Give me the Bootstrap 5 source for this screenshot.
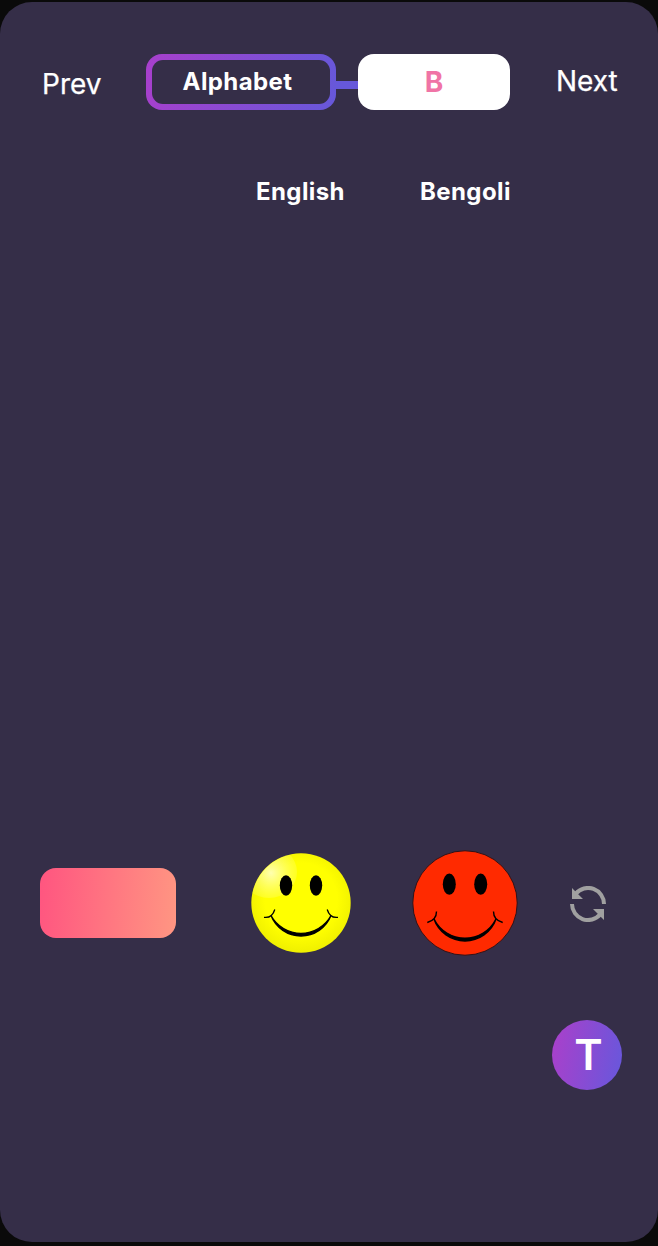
<!DOCTYPE html>
<html lang="en">
<head>
<meta charset="utf-8">
<meta name="viewport" content="width=device-width, initial-scale=1">
<title>Alphabet</title>
<link href="https://cdn.jsdelivr.net/npm/bootstrap@5.3.0/dist/css/bootstrap.min.css" rel="stylesheet">
<style>
body { background: #0a0a0a; font-family: Inter, sans-serif; color: #fff; }
.screen { height: 1240px; margin-top: 2px; border-radius: 32px; background: #352e48; padding-top: 52px; overflow: hidden; }
.topbar { height: 56px; }
.navlink { font-size: 28px; line-height: 56px; color: #fff; white-space: nowrap; }
.prev { width: 146px; padding: 4px 0 0 42px; -webkit-text-stroke: .25px #fff; }
.next { margin: -3px 0 0 46px; -webkit-text-stroke: .25px #fff; }
.topic { width: 190px; height: 56px; padding: 6px; border-radius: 16px; background: linear-gradient(100deg, #a83fcc, #6658da); }
.topic span { height: 44px; border-radius: 11px; background: #352e48; padding: 0 7px 1px 0; }
.label-text { font-size: 24px; font-weight: 700; letter-spacing: .4px; line-height: 30px; }
.joint { width: 22px; height: 8px; margin-top: 6px; background: #6658da; }
.letter { width: 152px; height: 56px; border-radius: 16px; background: #fff; color: #f074a6; font-size: 28px; font-weight: 700; }
.langs { margin-top: 67px; padding-left: 256px; }
.langs .first { width: 164px; }
.answers { height: 106px; margin-top: 643px; padding-left: 40px; }
.swatch { width: 136px; height: 70px; border-radius: 16px; background: linear-gradient(95deg, #ff5580, #ff9682); margin-right: 75px; }
.fab { width: 70px; height: 70px; margin: 64px 36px 0 auto; background: linear-gradient(100deg, #ac3fca, #6658dc); font-size: 43px; font-weight: 600; line-height: 68px; padding-left: 3px; }
</style>
</head>
<body>
<main class="screen">
  <header class="topbar d-flex align-items-center">
    <a class="navlink prev text-decoration-none" href="#">Prev</a>
    <div class="topic"><span class="label-text d-flex align-items-center justify-content-center">Alphabet</span></div>
    <div class="joint"></div>
    <div class="letter d-flex align-items-center justify-content-center">B</div>
    <a class="navlink next text-decoration-none" href="#">Next</a>
  </header>
  <div class="langs label-text d-flex">
    <div class="first">English</div><div>Bengoli</div>
  </div>
  <section class="answers d-flex align-items-center">
    <div class="swatch"></div>
    <svg width="100" height="100" viewBox="0 0 100 100" aria-label="Happy yellow face">
      <defs>
        <radialGradient id="body" cx=".5" cy=".46" r=".56"><stop offset=".65" stop-color="#ff0"/><stop offset="1" stop-color="#eeee00"/></radialGradient>
        <radialGradient id="shine" gradientUnits="userSpaceOnUse" cx="20" cy="20" r="32"><stop offset="0" stop-color="#ffffb0"/><stop offset="1" stop-color="#ffff60" stop-opacity=".15"/></radialGradient>
        <clipPath id="disc"><circle cx="50" cy="50" r="49.5"/></clipPath>
      </defs>
      <circle cx="50" cy="50" r="49.7" fill="url(#body)"/>
      <ellipse cx="18" cy="19" rx="28" ry="26" fill="url(#shine)" clip-path="url(#disc)"/>
      <ellipse cx="35" cy="32.5" rx="6.2" ry="10.2"/><ellipse cx="65" cy="32.5" rx="6.2" ry="10.2"/>
      <path d="M20 62.500A32.200 32.200 0 0 0 80 62.500A34.200 34.200 0 0 1 20 62.500Z" stroke="#000" stroke-width="1.300"/>
      <path d="M13 64.300Q21 65.500 23.800 56.500M87 64.300Q79 65.500 76.200 56.500" fill="none" stroke="#000" stroke-width="1.300"/>
    </svg>
    <svg width="106" height="106" viewBox="0 0 106 106" style="margin-left:61px" aria-label="Happy red face">
      <circle cx="53" cy="53" r="52.200" fill="#ff2a00" stroke="#201018" stroke-width=".9"/>
      <ellipse cx="37.300" cy="34.200" rx="6.500" ry="10.600"/><ellipse cx="68.700" cy="34.200" rx="6.500" ry="10.600"/>
      <path d="M22 69A32.900 32.900 0 0 0 84 69A34.600 34.600 0 0 1 22 69Z" stroke="#000" stroke-width="1.500"/>
      <path d="M15.300 72.500Q24.500 70 24.500 61.500M90.700 72.500Q81.500 70 81.500 61.500" fill="none" stroke="#000" stroke-width="1.400"/>
    </svg>
    <svg width="36" height="36" viewBox="0 0 36 36" style="margin:2px 0 0 52px" fill="#a0a0a0" aria-label="Refresh">
      <path d="M34 18A16 16 0 0 0 5.800 7.600M2 18A16 16 0 0 0 30.200 28.400" fill="none" stroke="#a0a0a0" stroke-width="4"/>
      <path d="M2 2V13H13ZM34 34V23H23Z"/>
    </svg>
  </section>
  <div class="fab rounded-circle text-center">T</div>
</main>
<script src="https://cdn.jsdelivr.net/npm/bootstrap@5.3.0/dist/js/bootstrap.bundle.min.js"></script>
</body>
</html>
